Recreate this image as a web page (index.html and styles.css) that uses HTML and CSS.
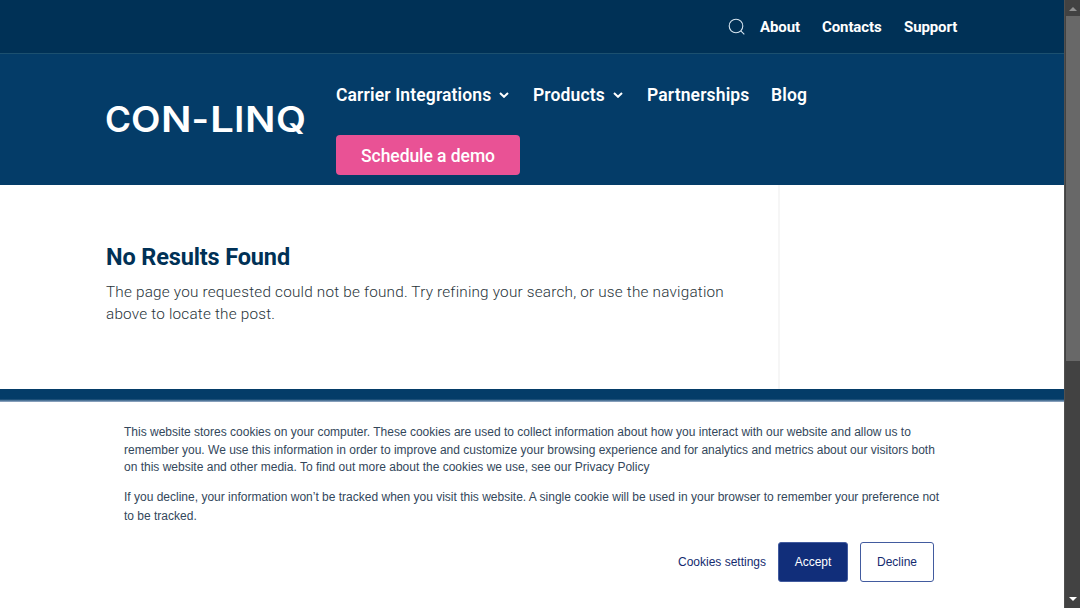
FILE: index.html
```html
<!DOCTYPE html>
<html lang="en">
<head>
<meta charset="utf-8">
<title>Page not found - CON-LINQ</title>
<link rel="stylesheet" href="styles.css">
</head>
<body>
<div class="page">
  <header>
    <div class="topbar">
      <svg class="search" viewBox="0 0 18 18"><circle cx="8" cy="8" r="6.8"/><path d="M12.8 12.8 16.3 16.3"/></svg>
      <a class="about">About</a><a class="contacts">Contacts</a><a class="support">Support</a>
    </div>
    <div class="mainbar">
      <svg class="logo" viewBox="0 0 204 32" role="img"><text y="28.5"><tspan x="-1" textLength="26" lengthAdjust="spacingAndGlyphs">C</tspan><tspan x="25" textLength="29.5" lengthAdjust="spacingAndGlyphs">O</tspan><tspan x="55" textLength="30.5" lengthAdjust="spacingAndGlyphs">N</tspan><tspan x="85.5" textLength="17.5" lengthAdjust="spacingAndGlyphs">-</tspan><tspan x="104" textLength="24" lengthAdjust="spacingAndGlyphs">L</tspan><tspan x="128.2" textLength="10" lengthAdjust="spacingAndGlyphs">I</tspan><tspan x="139" textLength="30.5" lengthAdjust="spacingAndGlyphs">N</tspan><tspan x="170" textLength="30" lengthAdjust="spacingAndGlyphs">Q</tspan></text></svg>
      <div class="menu">
        <nav>
          <a class="carrier">Carrier Integrations</a><svg class="chev" viewBox="0 0 10 6"><path d="M1 1 5 4.8 9 1"/></svg>
          <a class="products">Products</a><svg class="chev" viewBox="0 0 10 6"><path d="M1 1 5 4.8 9 1"/></svg>
          <a class="partners">Partnerships</a>
          <a class="blog">Blog</a>
        </nav>
        <a class="demo"><span>Schedule a demo</span></a>
      </div>
    </div>
  </header>
  <main>
    <article>
      <h1>No Results Found</h1>
      <p>The page you requested could not be found. Try refining your search, or use the navigation<br>above to locate the post.</p>
    </article>
  </main>
  <div class="band"></div>
  <section class="cookies">
    <p class="first">This website stores cookies on your computer. These cookies are used to collect information about how you interact with our website and allow us to<br>remember you. We use this information in order to improve and customize your browsing experience and for analytics and metrics about our visitors both<br>on this website and other media. To find out more about the cookies we use, see our Privacy Policy</p>
    <p class="second">If you decline, your information won’t be tracked when you visit this website. A single cookie will be used in your browser to remember your preference not<br>to be tracked.</p>
    <div class="actions"><a>Cookies settings</a><button class="accept">Accept</button><button class="decline">Decline</button></div>
  </section>
</div>
<div class="scrollbar">
  <svg class="arrow up" viewBox="0 0 8 4"><path d="M0 4 4 0 8 4z"/></svg>
  <div class="thumb"></div>
  <svg class="arrow down" viewBox="0 0 8 4"><path d="M0 0 4 4 8 0z"/></svg>
</div>
</body>
</html>
```
FILE: styles.css
```css
* { box-sizing: border-box; }
body { margin: 0; width: 1080px; height: 608px; display: flex; overflow: hidden; background: #fff; font-family: Roboto, sans-serif; white-space: nowrap; }
.page { width: 1064px; height: 608px; display: flex; flex-direction: column; }
.topbar { height: 54px; background: #003156; border-bottom: 1px solid #1c506f; display: flex; align-items: center; padding-left: 728px; color: #fff; font-size: 15px; font-weight: 700; letter-spacing: -0.1px; }
.search { width: 18px; height: 18px; fill: none; stroke: #d5e4ef; stroke-width: 1.1; margin-right: 14px; }
.about { width: 62px; }
.contacts { width: 82px; }
.mainbar { height: 131px; background: #043c68; display: flex; padding-left: 106px; color: #fff; }
.logo { width: 204px; height: 32px; margin: 49px 26px 0 0; overflow: visible; }
.logo text { font-family: Inter, sans-serif; font-size: 35px; font-weight: 600; fill: #fff; }
.menu { padding-top: 29px; }
nav { height: 23px; display: flex; align-items: center; font-size: 17.5px; font-weight: 600; letter-spacing: 0.14px; }
.carrier { width: 163px; }
.products { width: 80px; }
.partners { width: 124px; }
.chev { width: 10px; height: 6px; fill: none; stroke: #fff; stroke-width: 2; margin-right: 24px; }
.demo { display: flex; align-items: center; justify-content: center; width: 184px; height: 40px; margin-top: 29px; padding-top: 2px; border-radius: 4px; background: #e95295; font-size: 17.5px; font-weight: 500; letter-spacing: -0.06px; }
main { height: 204px; padding: 58px 0 0 106px; display: flex; background: linear-gradient(90deg, transparent 778px, #f6f6f6 778px, #f6f6f6 780px, transparent 780px); }
h1 { margin: 0; font-size: 23.5px; line-height: 28px; font-weight: 700; letter-spacing: -0.14px; color: #003156; }
article p { margin: 10px 0 0; font-size: 15.3px; line-height: 22px; font-weight: 300; letter-spacing: 0.2px; color: #28343a; }
.band { height: 13px; background: linear-gradient(#043c68 10px, #9db0c9 13px); }
.cookies { flex: 1; padding: 22px 0 0 124px; background: #fff; font-family: "Liberation Sans", Arial, sans-serif; font-size: 12px; color: #33475b; }
.cookies p { margin: 0; }
.first { line-height: 17.6px; }
.cookies .second { margin-top: 11px; line-height: 19px; }
.actions { display: flex; align-items: center; margin-top: 16px; padding-left: 554px; color: #142b6f; }
.actions a { width: 100px; }
button { font: inherit; height: 40px; padding: 0; border: 1px solid #425b9f; border-radius: 3px; }
.accept { width: 70px; color: #fff; background: #112e7a; margin-right: 12px; }
.decline { width: 74px; color: #142b6f; background: #fff; }
.scrollbar { width: 16px; height: 608px; background: #424242; display: flex; flex-direction: column; align-items: center; border-left: 1px solid #505050; }
.arrow { width: 8px; height: 4px; }
.up { fill: #919191; margin: 7px 0 5px; }
.thumb { width: 14px; height: 345px; background: #686868; }
.down { fill: #fff; margin-top: auto; margin-bottom: 7px; }
```
